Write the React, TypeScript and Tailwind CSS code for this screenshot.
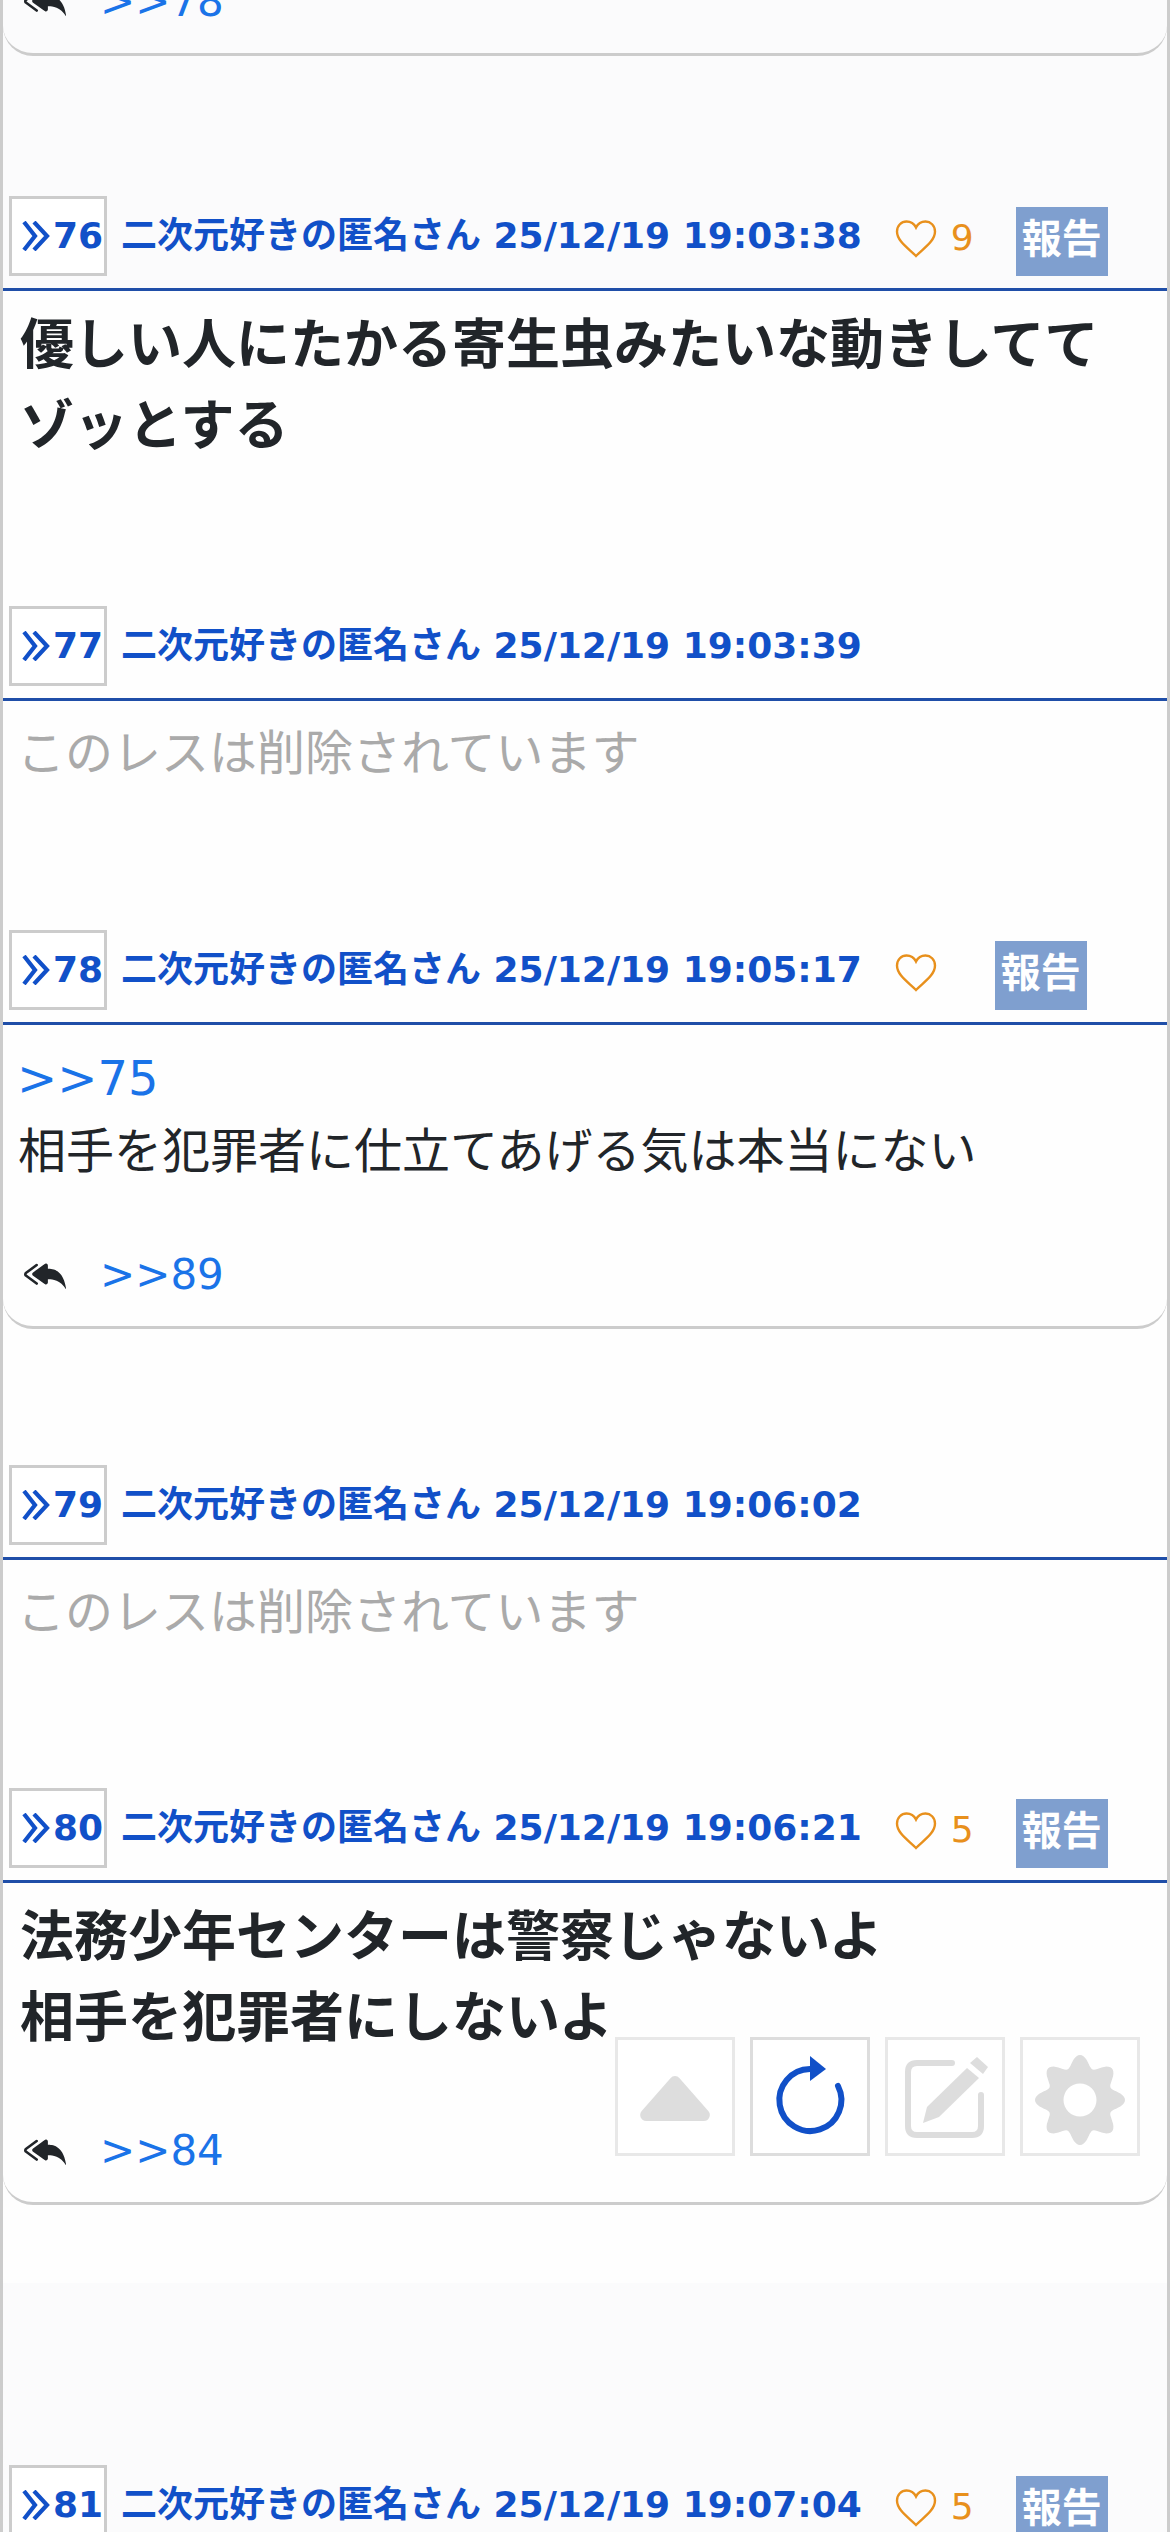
import type { ReactNode } from "react";
import { BsCaretUpFill, BsReplyAllFill } from "react-icons/bs";

const FONT = "font-['DejaVu_Sans','Noto_Sans_CJK_JP',sans-serif]";

type PostData = {
  no: number;
  time: string;
  likes?: number | "";
  deleted?: boolean;
  strong?: string[];
  quote?: string;
  text?: string;
  replies?: string;
  tint?: boolean;
  pad: string;
  cardTop?: string;
};

const posts: PostData[] = [
  {
    no: 76,
    time: "25/12/19 19:03:38",
    likes: 9,
    tint: true,
    strong: ["優しい人にたかる寄生虫みたいな動きしてて", "ゾッとする"],
    pad: "pb-[139px]",
  },
  { no: 77, time: "25/12/19 19:03:39", deleted: true, pad: "pb-[141px]" },
  {
    no: 78,
    time: "25/12/19 19:05:17",
    likes: "",
    quote: ">>75",
    text: "相手を犯罪者に仕立てあげる気は本当にない",
    replies: ">>89",
    pad: "pb-[136px]",
    cardTop: "pt-[51px]",
  },
  { no: 79, time: "25/12/19 19:06:02", deleted: true, pad: "pb-[140px]" },
  {
    no: 80,
    time: "25/12/19 19:06:21",
    likes: 5,
    strong: ["法務少年センターは警察じゃないよ", "相手を犯罪者にしないよ"],
    replies: ">>84",
    pad: "pb-[78px]",
    cardTop: "pt-[55px]",
  },
  { no: 81, time: "25/12/19 19:07:04", likes: 5, pad: "bg-[#fbfbfc] pt-[182px]" },
];

// 8 rounded teeth, built as a polar wave around the hub
const gearPath = (() => {
  const pts: string[] = [];
  for (let i = 0; i < 160; i++) {
    const a = (i / 160) * Math.PI * 2;
    const r = 39 + 6 * Math.cos(8 * a);
    pts.push(`${(60 + r * Math.sin(a)).toFixed(1)} ${(63 - r * Math.cos(a)).toFixed(1)}`);
  }
  return `M${pts.join("L")}Z`;
})();

function ReplyRow({ label }: { label: string }) {
  return (
    <div className="flex h-[72px] items-center pl-[21px]">
      <BsReplyAllFill className="size-[42px] text-[#212529]" />
      <span className="ml-[34px] text-[42px] text-[#1a73e8]">{label}</span>
    </div>
  );
}

function Post({ post }: { post: PostData }) {
  const hasLikes = post.likes !== undefined;
  return (
    <section className={post.pad}>
      <header className={`h-[95px] border-b-[3px] border-[#1f4ea8] pl-[6px] ${post.tint ? "bg-[#fbfbfc]" : ""}`}>
        <div className="flex h-[80px] items-center text-[36px] font-bold text-[#1150c8]">
          <span className="flex h-[80px] w-[98px] shrink-0 items-center border-[3px] border-[#ccc] bg-white pl-[10px]">
            <svg viewBox="0 0 28 30" className="mr-[3px] h-[30px] w-[28px] shrink-0" fill="none" stroke="#1150c8" strokeWidth="4.2">
              <path d="M2 1L13 15L2 29M12 1L25 15L12 29" />
            </svg>
            {post.no}
          </span>
          <span className="ml-[14px] whitespace-nowrap">
            二次元好きの匿名さん {post.time}
          </span>
          {hasLikes && (
            <>
              <svg viewBox="0 0 42 38" className="ml-[33px] mt-[6px] h-[38px] w-[42px] shrink-0" fill="none" stroke="#e8901c" strokeWidth="2.4">
                <path d="M21 36C13 28 2 21 2 11.500C2 5.500 6.500 1.500 11.500 1.500C15.500 1.500 19 3.500 21 7.500C23 3.500 26.500 1.500 30.500 1.500C35.500 1.500 40 5.500 40 11.500C40 21 29 28 21 36Z" />
              </svg>
              {post.likes ? (
                <span className="ml-[14px] mt-[4px] w-[23px] text-[36px] font-normal text-[#e8901c]">{post.likes}</span>
              ) : null}
              <span
                className={`mt-[11px] flex h-[69px] w-[92px] shrink-0 items-center justify-center bg-[#7f9fcf] pb-[6px] text-[40px] text-white ${post.likes ? "ml-[42px]" : "ml-[58px]"}`}
              >
                報告
              </span>
            </>
          )}
        </div>
      </header>

      {post.deleted && (
        <p className="pl-[14px] pt-[16px] text-[48px] leading-[72px] text-[#aaa]">このレスは削除されています</p>
      )}

      {post.strong && (
        <div className="pl-[17px] pt-[14px] text-[54px] font-bold leading-[81px] text-[#212529]">
          {post.strong.map((line) => (
            <p key={line}>{line}</p>
          ))}
        </div>
      )}

      {post.text && (
        <div className="pl-[15px] pt-[18px] text-[48px] leading-[72px] text-[#212529]">
          <p className="-ml-[1px] -mt-[1px] pb-[1px] text-[#1a73e8]">{post.quote}</p>
          <p>{post.text}</p>
        </div>
      )}

      {post.replies && (
        <div className={`rounded-b-[30px] border-b-[3px] border-[#ccc] pb-[16px] ${post.cardTop}`}>
          <ReplyRow label={post.replies} />
        </div>
      )}
    </section>
  );
}

function FloatButton({ active, children }: { active?: boolean; children: ReactNode }) {
  return (
    <button className={`flex h-[119px] w-[120px] items-center justify-center border-[3px] bg-white ${active ? "border-[#ddd]" : "border-[#e8e8e8]"}`}>
      {children}
    </button>
  );
}

export default function App() {
  return (
    <div className={`relative h-[2532px] overflow-hidden border-x-[3px] border-[#ccc] bg-[#fefefe] ${FONT}`}>
      <div className="-mt-[35px] bg-[#fbfbfc] pb-[140px]">
        <div className="rounded-b-[30px] border-b-[3px] border-[#ccc] pb-[16px]">
          <ReplyRow label=">>78" />
        </div>
      </div>

      {posts.map((post) => (
        <Post key={post.no} post={post} />
      ))}

      <div className="absolute left-[612px] top-[2037px] flex gap-[15px]">
        <FloatButton>
          <BsCaretUpFill className="size-[96px] shrink-0 text-[#ddd]" />
        </FloatButton>
        <FloatButton active>
          <svg viewBox="0 0 120 119" className="h-[119px] w-[120px] shrink-0" fill="none">
            <path d="M88 49A31 31 0 1 1 60 32" stroke="#1150c8" strokeWidth="6" strokeLinecap="round" />
            <path d="M60 19L76 32L60 44Z" fill="#1150c8" />
          </svg>
        </FloatButton>
        <FloatButton>
          <svg viewBox="0 0 120 119" className="h-[119px] w-[120px] shrink-0" fill="none">
            <path d="M67 26H32Q23 26 23 35V89Q23 98 32 98H87Q96 98 96 89V58" stroke="#ddd" strokeWidth="6" strokeLinecap="round" />
            <path d="M42 70L82 31L94 41L54 80L38 86Z" fill="#ddd" />
            <path d="M92 20L103 30L98 37L85 26Z" fill="#ddd" />
          </svg>
        </FloatButton>
        <FloatButton>
          <svg viewBox="0 0 120 119" className="h-[119px] w-[120px] shrink-0">
            <path d={`${gearPath}M60 46.500A16.500 16.500 0 1 0 60 79.500A16.500 16.500 0 1 0 60 46.500Z`} fill="#ddd" fillRule="evenodd" />
          </svg>
        </FloatButton>
      </div>
    </div>
  );
}
